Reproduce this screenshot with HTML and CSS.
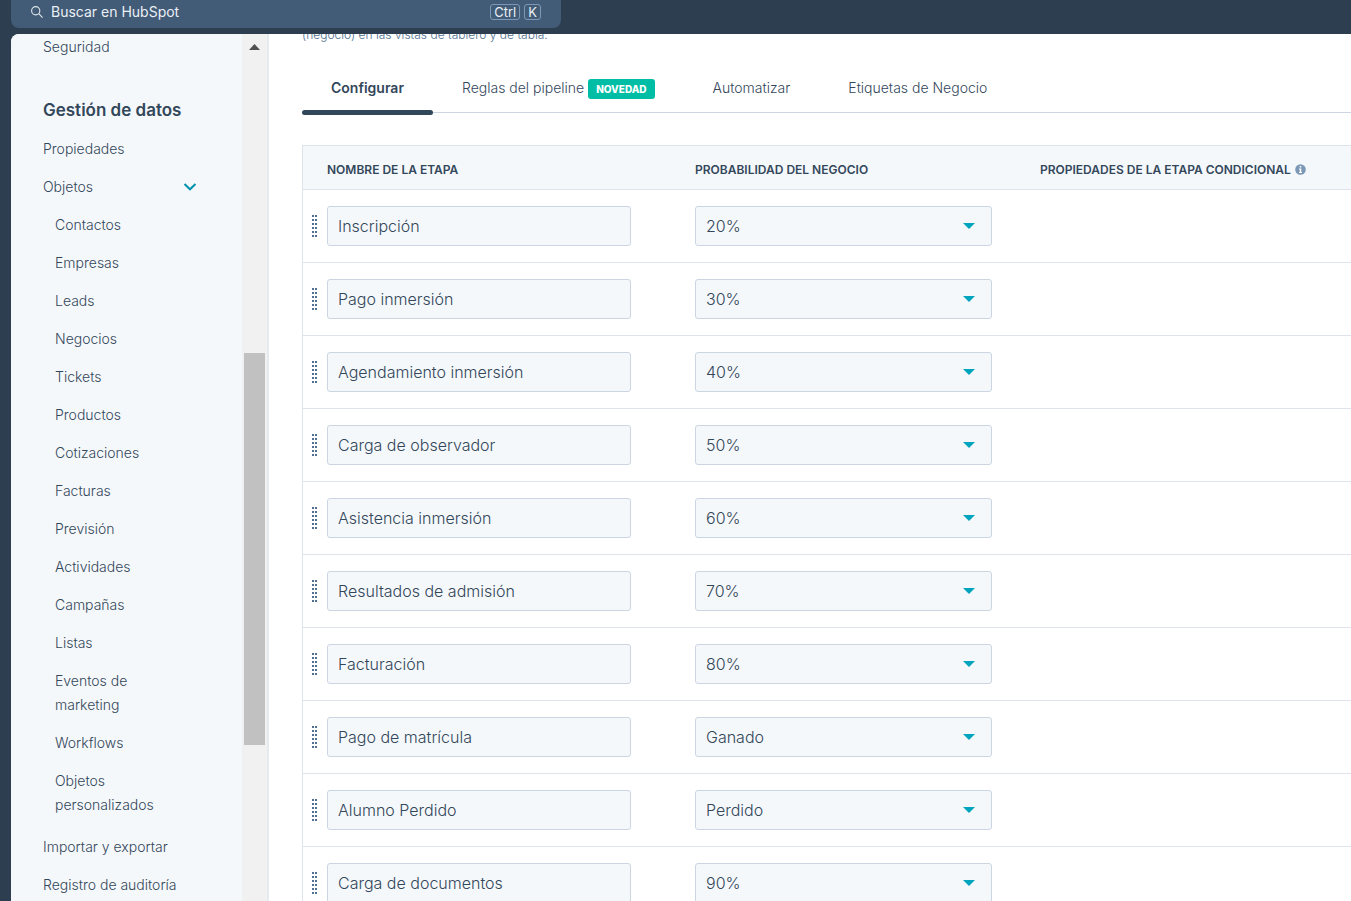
FILE: index.html
```html
<!DOCTYPE html>
<html lang="es">
<head>
<meta charset="utf-8">
<title>Configuración de pipeline</title>
<link rel="stylesheet" href="styles.css">
</head>
<body>
<header class="topbar">
  <label class="search">
    <svg class="search-icon" viewBox="0 0 14 14" aria-hidden="true"><circle cx="5.5" cy="5.5" r="4.8"/><path d="M9 9L13.5 13.5"/></svg>
    <input class="search-input" type="text" placeholder="Buscar en HubSpot" aria-label="Buscar en HubSpot">
    <kbd class="key">Ctrl</kbd><kbd class="key">K</kbd>
  </label>
</header>
<div class="shell">
  <aside class="sidebar">
    <nav class="nav">
      <a class="nav-link" href="#">Seguridad</a>
      <h2 class="nav-title">Gestión de datos</h2>
      <a class="nav-link" href="#">Propiedades</a>
      <button class="nav-link nav-toggle" type="button" aria-expanded="true">Objetos
        <svg class="chevron" viewBox="0 0 14 8" aria-hidden="true"><path d="M1.5 1L7 6.3L12.5 1"/></svg>
      </button>
      <div class="subnav">
        <a class="nav-link" href="#">Contactos</a>
        <a class="nav-link" href="#">Empresas</a>
        <a class="nav-link" href="#">Leads</a>
        <a class="nav-link" href="#">Negocios</a>
        <a class="nav-link" href="#">Tickets</a>
        <a class="nav-link" href="#">Productos</a>
        <a class="nav-link" href="#">Cotizaciones</a>
        <a class="nav-link" href="#">Facturas</a>
        <a class="nav-link" href="#">Previsión</a>
        <a class="nav-link" href="#">Actividades</a>
        <a class="nav-link" href="#">Campañas</a>
        <a class="nav-link" href="#">Listas</a>
        <a class="nav-link" href="#">Eventos de marketing</a>
        <a class="nav-link" href="#">Workflows</a>
        <a class="nav-link" href="#">Objetos personalizados</a>
      </div>
      <a class="nav-link" href="#">Importar y exportar</a>
      <a class="nav-link" href="#">Registro de auditoría</a>
    </nav>
    <div class="scrollbar" aria-hidden="true">
      <svg class="scroll-up" viewBox="0 0 11 6"><path d="M0 6L5.5 0L11 6Z"/></svg>
      <div class="scroll-thumb"></div>
    </div>
  </aside>
  <main class="main">
    <p class="description">(negocio) en las vistas de tablero y de tabla.</p>
    <nav class="tabs">
      <a class="tab tab-active" href="#" aria-current="page">Configurar</a>
      <a class="tab" href="#">Reglas del pipeline <span class="badge">NOVEDAD</span></a>
      <a class="tab" href="#">Automatizar</a>
      <a class="tab" href="#">Etiquetas de Negocio</a>
    </nav>
    <table class="stages">
      <thead>
        <tr>
          <th class="col-name" scope="col">NOMBRE DE LA ETAPA</th>
          <th class="col-prob" scope="col">PROBABILIDAD DEL NEGOCIO</th>
          <th class="col-props" scope="col">PROPIEDADES DE LA ETAPA CONDICIONAL
            <svg class="info" viewBox="0 0 11 11" aria-hidden="true"><circle cx="5.5" cy="5.5" r="5.3" fill="#7c98b6"/><path d="M4.7 2h1.6v1.5H4.7zM4 4.6h2.3v3.3H7v1H4v-1h.7V5.6H4z" fill="#fff"/></svg>
          </th>
        </tr>
      </thead>
      <tbody id="stage-rows"></tbody>
    </table>
  </main>
</div>
<script src="stages.js"></script>
</body>
</html>
```
FILE: styles.css
```css
* { box-sizing: border-box; }

body {
  display: flex;
  flex-direction: column;
  height: 100vh;
  margin: 0;
  overflow: hidden;
  background: #2d3e50;
  color: #33475b;
  font: 300 14px/24px Inter, "Liberation Sans", sans-serif;
}

a { color: inherit; text-decoration: none; }

button, input, select { color: inherit; font: inherit; }

.topbar {
  flex: none;
  height: 34px;
  padding-left: 11px;
}

.search {
  display: flex;
  align-items: center;
  gap: 4px;
  width: 550px;
  height: 28px;
  padding: 0 20px 4px;
  border-radius: 0 0 8px 8px;
  background: #425b76;
  color: #eaf0f6;
}

.search-icon {
  width: 12px;
  height: 12px;
  fill: none;
  stroke: #dfe6ee;
  stroke-width: 1.3;
}

.search-input {
  flex: 1;
  min-width: 0;
  padding: 0 4px;
  border: 0;
  background: none;
  font-weight: 400;
}

.search-input::placeholder { color: #eaf0f6; opacity: 1; }

.key {
  height: 16px;
  padding: 0 3px;
  border: 1px solid #7c98b6;
  border-radius: 3px;
  font: 400 13px/14px Inter, sans-serif;
}

.shell {
  display: flex;
  flex: 1;
  min-height: 0;
  margin-left: 11px;
  overflow: hidden;
  border-top-left-radius: 8px;
  background: #fff;
}

.sidebar {
  display: flex;
  flex: none;
  width: 258px;
  border-right: 2px solid #e5eaef;
  background: #f5f8fa;
}

.nav {
  flex: 1;
  padding: 1px 45px 0 32px;
  overflow: hidden;
}

.nav-link { display: block; margin-bottom: 14px; }

.nav-title {
  margin: 39px 0 15px;
  font-size: 17px;
  font-weight: 600;
  line-height: 24px;
  white-space: nowrap;
}

.nav-toggle {
  display: flex;
  align-items: center;
  justify-content: space-between;
  width: 100%;
  padding: 0;
  border: 0;
  background: none;
}

.chevron {
  width: 14px;
  height: 8px;
  fill: none;
  stroke: #0091ae;
  stroke-width: 2;
}

.subnav { padding: 0 20px 4px 12px; }

.scrollbar {
  display: grid;
  grid-template-rows: 319fr 392fr 156fr;
  flex: none;
  width: 25px;
  padding: 0 2px;
  background: #f1f1f1;
}

.scroll-up {
  width: 11px;
  height: 6px;
  margin: 10px auto 0;
  fill: #505050;
}

.scroll-thumb { background: #c1c1c1; }

.main {
  flex: 1;
  min-width: 0;
  padding-left: 33px;
  overflow: hidden;
}

.description {
  margin: -11px 0 29px;
  color: #516f90;
  font-size: 12px;
}

.tabs {
  display: flex;
  border-bottom: 1px solid #cbd6e2;
}

.tab {
  height: 36px;
  padding: 0 29px;
  white-space: nowrap;
}

.tab-active {
  position: relative;
  font-weight: 600;
}

.tab-active::after {
  content: "";
  position: absolute;
  right: 0;
  bottom: -3px;
  left: 0;
  height: 5px;
  border-radius: 3px;
  background: #33475b;
}

.badge {
  display: inline-block;
  padding: 0 8px;
  border-radius: 3px;
  background: #00bda5;
  color: #fff;
  font-size: 10px;
  font-weight: 800;
  line-height: 20px;
}

.stages {
  width: 100%;
  margin-top: 32px;
  border-left: 1px solid #dfe3eb;
  border-spacing: 0;
  table-layout: fixed;
}

.stages th {
  height: 45px;
  padding: 4px 0 0;
  border: solid #dfe3eb;
  border-width: 1px 0;
  background: #f5f8fa;
  font-size: 12px;
  font-weight: 600;
  text-align: left;
  white-space: nowrap;
}

.stages .col-name { width: 392px; padding-left: 24px; }

.col-prob { width: 345px; }

.info {
  width: 11px;
  height: 11px;
  margin-left: 1px;
  vertical-align: -1px;
}

.stages td {
  height: 73px;
  padding: 0;
  border-bottom: 1px solid #dfe3eb;
}

.name-cell {
  display: flex;
  align-items: center;
  gap: 10px;
  padding: 0 64px 0 9px;
}

.grip {
  flex: none;
  width: 5px;
  height: 22px;
  fill: #516f90;
}

.field {
  flex: 1;
  width: 100%;
  min-width: 0;
  height: 40px;
  padding: 0 10px;
  border: 1px solid #cbd6e2;
  border-radius: 3px;
  background: #f5f8fa;
  font-size: 16px;
}

.prob-cell { display: grid; padding-right: 48px; }

.prob-cell > * { grid-area: 1 / 1; }

.select { appearance: none; }

.caret {
  align-self: center;
  justify-self: end;
  width: 12px;
  height: 6px;
  margin-right: 17px;
  fill: #00a4bd;
  pointer-events: none;
}
```
FILE: stages.js
```js
const stages = [
  ["Inscripción", "20%"],
  ["Pago inmersión", "30%"],
  ["Agendamiento inmersión", "40%"],
  ["Carga de observador", "50%"],
  ["Asistencia inmersión", "60%"],
  ["Resultados de admisión", "70%"],
  ["Facturación", "80%"],
  ["Pago de matrícula", "Ganado"],
  ["Alumno Perdido", "Perdido"],
  ["Carga de documentos", "90%"]
];

const dots = [0, 4, 8, 12, 16, 20]
  .map(y => `<path d="M0 ${y}h2v2H0zM3 ${y}h2v2H3z"/>`)
  .join("");

document.getElementById("stage-rows").innerHTML = stages.map(([name, probability]) => `
  <tr>
    <td><div class="name-cell">
      <svg class="grip" viewBox="0 0 5 22" aria-hidden="true">${dots}</svg>
      <input class="field" type="text" value="${name}" aria-label="Nombre de la etapa">
    </div></td>
    <td><div class="prob-cell">
      <select class="field select" aria-label="Probabilidad de ${name}"><option>${probability}</option></select>
      <svg class="caret" viewBox="0 0 12 6" aria-hidden="true"><path d="M0 0H12L6 6Z"/></svg>
    </div></td>
    <td></td>
  </tr>`).join("");
```
